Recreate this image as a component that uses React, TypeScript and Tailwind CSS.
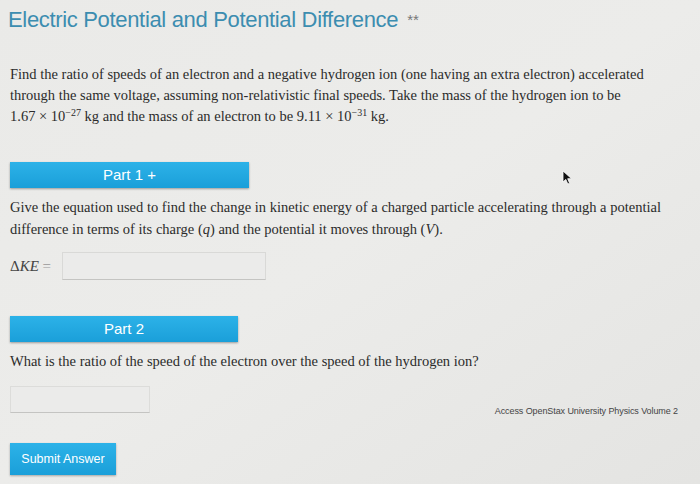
import React from "react";

const serif = { fontFamily: '"Liberation Serif", "Times New Roman", serif' };

const PartBar = ({ label, width }: { label: string; width: string }) => (
  <div
    className={`${width} h-[26px] bg-gradient-to-b from-[#2cb2e8] to-[#1a9fd9] text-white flex items-center justify-center text-[15px] shadow-[0_1px_2px_rgba(0,0,0,0.35)] font-['Liberation_Sans',Arial,sans-serif]`}
  >
    {label}
  </div>
);

const Cursor = () => (
  <svg width="11" height="15" viewBox="0 0 11 15" className="absolute left-[562px] top-[170px]">
    <path d="M1 1 L1 12 L3.8 9.4 L5.8 14 L7.6 13.2 L5.7 8.7 L9.6 8.7 Z" fill="#111" stroke="#fff" strokeWidth="0.8" />
  </svg>
);

export default function App() {
  return (
    <div className="w-[700px] h-[484px] overflow-hidden bg-gradient-to-br from-[#eaeae8] via-[#ececea] to-[#e4e4e2] relative">
      <div className="pt-[6px] pl-[8px]">
        <h1 className="text-[#3c8db0] text-[22px] leading-[28px] tracking-[-0.015em] font-['Liberation_Sans',Arial,sans-serif]">
          Electric Potential and Potential Difference
          <span className="text-[#777] text-[15px] align-top ml-[9px] tracking-normal">**</span>
        </h1>
      </div>

      <div className="mt-[30px] pl-[10px] text-[14.5px] leading-[21px] text-[#2b2b2b] whitespace-nowrap" style={serif}>
        Find the ratio of speeds of an electron and a negative hydrogen ion (one having an extra electron) accelerated
        <br />
        through the same voltage, assuming non-relativistic final speeds. Take the mass of the hydrogen ion to be
        <br />
        1.67 × 10<sup className="text-[10px]">−27</sup> kg and the mass of an electron to be 9.11 × 10<sup className="text-[10px]">−31</sup> kg.
      </div>

      <div className="mt-[35px] pl-[10px]">
        <PartBar label="Part 1 +" width="w-[239px]" />
      </div>
      <Cursor />

      <div className="mt-[8px] pl-[10px] text-[14.5px] leading-[22px] text-[#2b2b2b] whitespace-nowrap" style={serif}>
        Give the equation used to find the change in kinetic energy of a charged particle accelerating through a potential
        <br />
        difference in terms of its charge (<i>q</i>) and the potential it moves through (<i>V</i>).
      </div>

      <div className="mt-[12px] pl-[10px] flex items-center text-[15px] text-[#444]" style={serif}>
        <span className="w-[48px]">
          Δ<i>KE</i> <span className="text-[#999]">=</span>
        </span>
        <div className="ml-[4px] w-[204px] h-[28px] border border-[#d9d9d7] border-b-[#c4c4c2] bg-[#ebebea]" />
      </div>

      <div className="mt-[36px] pl-[10px]">
        <PartBar label="Part 2" width="w-[228px]" />
      </div>

      <div className="mt-[8px] pl-[10px] text-[14.5px] leading-[22px] text-[#2b2b2b]" style={serif}>
        What is the ratio of the speed of the electron over the speed of the hydrogen ion?
      </div>

      <div className="mt-[14px] pl-[10px] pr-[22px] flex items-end justify-between">
        <div className="w-[140px] h-[27px] border border-[#dcdcda] border-b-[#c4c4c2] bg-[#ebebea]" />
        <span className="text-[9px] text-[#444] font-['Liberation_Sans',Arial,sans-serif] mb-[-5px] tracking-[-0.01em]">
          Access OpenStax University Physics Volume 2
        </span>
      </div>

      <div className="mt-[30px] pl-[10px]">
        <button className="w-[106px] h-[32px] bg-gradient-to-b from-[#2cb2e8] to-[#1a9fd9] text-white text-[12.5px] font-['Liberation_Sans',Arial,sans-serif] shadow-[0_1px_2px_rgba(0,0,0,0.3)]">
          Submit Answer
        </button>
      </div>
    </div>
  );
}
